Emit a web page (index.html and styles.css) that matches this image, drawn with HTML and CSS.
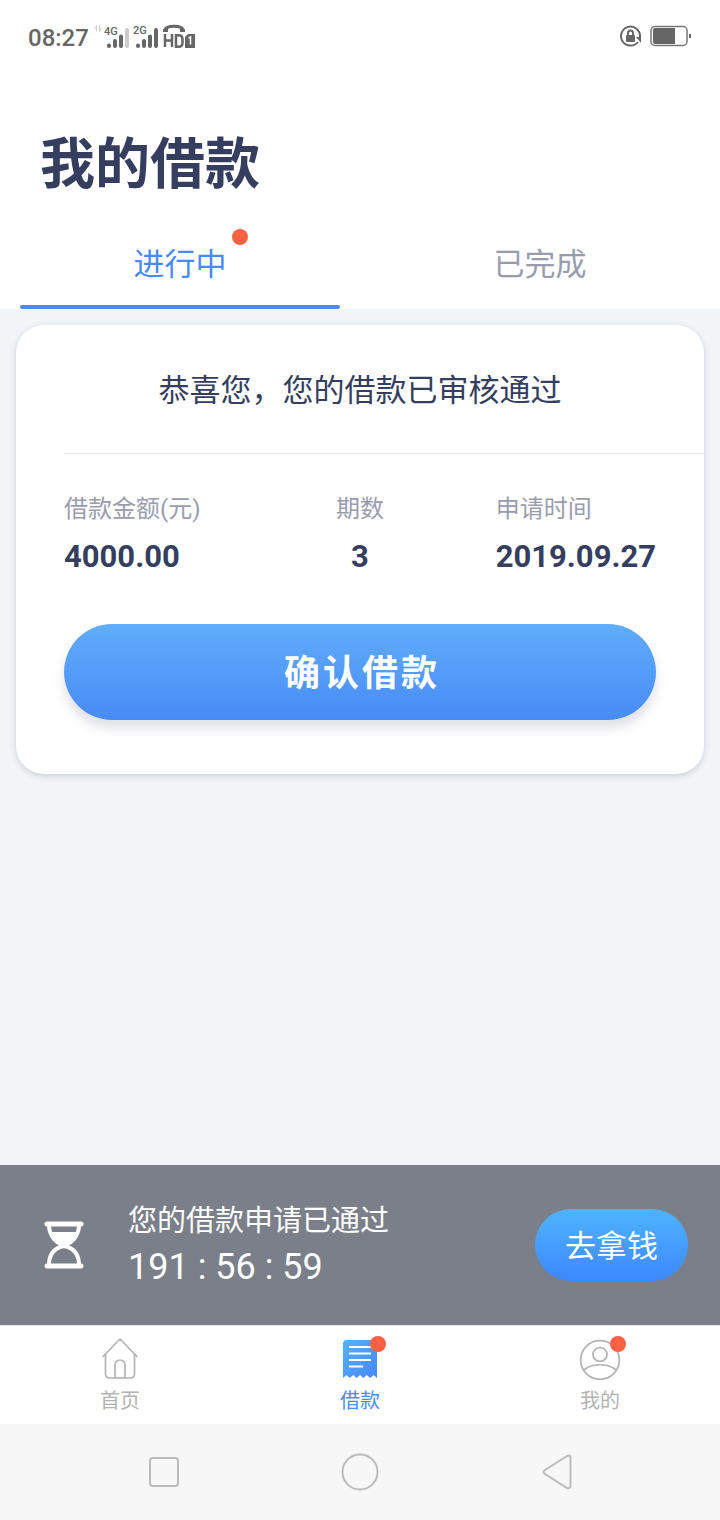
FILE: index.html
```html
<!DOCTYPE html>
<html lang="zh-CN">
<head>
<meta charset="utf-8">
<meta name="viewport" content="width=device-width, initial-scale=1">
<title>我的借款</title>
<link rel="stylesheet" href="styles.css">
</head>
<body>
<div class="app">
  <div class="status">
    <div class="status-left">
      <span class="clock">08:27</span>
      <svg class="signals" width="104" height="28" viewBox="0 0 104 28" aria-hidden="true">
        <path d="M4 3L1 6.500h3zM6 10l3-3.500H6z" fill="#ccc"/>
        <path d="M3.500 4v5.500M6.500 3.500v6" stroke="#ccc" stroke-width="1"/>
        <text x="11" y="13" class="signal-label">4G</text>
        <g stroke="#666" stroke-width="4" stroke-linecap="round">
          <path d="M16 23.500v.5M22 19v5M28 14.500v9.500M45 23.500v.5M51 19v5M57 14.500v9.500M63 8v16"/>
          <path d="M34 8v16" stroke="#ccc"/>
        </g>
        <text x="40" y="12" class="signal-label">2G</text>
        <path d="M72 8c1-5 17-5 18 0" fill="none" stroke="#666" stroke-width="3"/>
        <path d="M70 7h5v3h-5zM87 7h5v3h-5z" fill="#666"/>
        <path d="M72 12v13M79 12v13M72 18.500h7M83 13.250h2.500q4 0 4 4v3.500q0 4-4 4H83z" fill="none" stroke="#666" stroke-width="2.500"/>
        <path d="M95 12h7v14H92V15z" fill="#666"/>
        <path d="M95.500 16l2-1v7.500" fill="none" stroke="#fff" stroke-width="1.500"/>
      </svg>
    </div>
    <svg width="72" height="26" viewBox="0 0 72 26" aria-hidden="true">
      <path d="M19 19a9.500 9.500 0 1 1 2-5" fill="none" stroke="#666" stroke-width="2"/>
      <path d="M17 14h5v6z" fill="#666"/>
      <rect x="7" y="12" width="9" height="7" rx="1" fill="#666"/>
      <path d="M9 12v-2a2.500 2.500 0 0 1 5 0v2" fill="none" stroke="#666" stroke-width="2"/>
      <rect x="32" y="3.500" width="36" height="19" rx="4" fill="#fff" stroke="#777" stroke-width="1.500"/>
      <path d="M36 5h20v16H36a2 2 0 0 1-2-2V7a2 2 0 0 1 2-2z" fill="#666"/>
      <path d="M70 11h2v4h-2z" fill="#666"/>
    </svg>
  </div>

  <header class="header">
    <h1 class="title">我的借款</h1>
    <div class="tabs" role="tablist">
      <button class="tab tab-active" role="tab" aria-selected="true"><span class="tab-text">进行中</span><span class="dot tab-dot"></span></button>
      <button class="tab" role="tab" aria-selected="false"><span class="tab-text">已完成</span></button>
    </div>
  </header>

  <main class="content">
    <section class="card">
      <h2 class="card-title">恭喜您，您的借款已审核通过</h2>
      <dl class="facts">
        <div class="fact"><dt>借款金额(元)</dt><dd>4000.00</dd></div>
        <div class="fact fact-center"><dt>期数</dt><dd>3</dd></div>
        <div class="fact fact-end"><dt>申请时间</dt><dd>2019.09.27</dd></div>
      </dl>
      <button class="confirm">确认借款</button>
    </section>
  </main>

  <aside class="banner">
    <svg class="hourglass" width="40" height="50" viewBox="0 0 40 50" fill="none" stroke="#fff" aria-hidden="true">
      <path d="M3 4h34M3 46h34" stroke-width="5" stroke-linecap="round"/>
      <path d="M5 5c0 9 5 17 15 20C30 22 35 14 35 5M5 45c0-10 5-17 15-19 10 2 15 9 15 19" stroke-width="4"/>
      <path d="M5 12h30c-2 8-6 12-12 14h-6C11 24 7 20 5 12z" fill="#fff" stroke="none"/>
      <path d="M20 22v6" stroke-width="5"/>
    </svg>
    <div class="banner-text">
      <p class="banner-title">您的借款申请已通过</p>
      <p class="countdown">191 : 56 : 59</p>
    </div>
    <button class="claim">去拿钱</button>
  </aside>

  <nav class="tabbar">
    <a class="item" href="#home">
      <svg class="item-icon" width="44" height="44" viewBox="0 0 44 44" fill="none" stroke="#b3b3b3" stroke-width="1.700" stroke-linecap="round" stroke-linejoin="round" aria-hidden="true">
        <path d="M5 18.500L20.500 2.500q1.500-1.500 3 0L39 18.500M7.500 16v20a4 4 0 0 0 4 4h21a4 4 0 0 0 4-4V16M17 40V27a5 5 0 0 1 10 0v13"/>
      </svg>
      <span>首页</span>
    </a>
    <a class="item item-active" href="#loans">
      <svg class="item-icon" width="44" height="44" viewBox="0 0 44 44" aria-hidden="true">
        <defs><linearGradient id="bill" x1="0" y1="0" x2="1" y2="1"><stop offset="0" stop-color="#55b2fb"/><stop offset="1" stop-color="#4787f5"/></linearGradient></defs>
        <path d="M5 6a4 4 0 0 1 4-4h30v38l-3.400-3-3.400 3-3.400-3-3.400 3-3.400-3-3.400 3-3.400-3-3.400 3-3.400-3L5 40z" fill="url(#bill)"/>
        <path d="M11 9h22M11 15.500h22M11 22h22M11 28.500h14" stroke="#fff" stroke-width="2"/>
      </svg>
      <span class="dot item-dot"></span>
      <span>借款</span>
    </a>
    <a class="item" href="#me">
      <svg class="item-icon" width="44" height="44" viewBox="0 0 44 44" fill="none" stroke="#b3b3b3" stroke-width="1.700" aria-hidden="true">
        <circle cx="22" cy="22" r="19.300"/><circle cx="22" cy="16.500" r="7"/><path d="M6 32c8-7 24-7 32 0"/>
      </svg>
      <span class="dot item-dot"></span>
      <span>我的</span>
    </a>
  </nav>

  <div class="system">
    <button class="key" aria-label="Recent"><svg width="40" height="40" viewBox="0 0 40 40"><rect x="6" y="6" width="28" height="28" rx="3"/></svg></button>
    <button class="key" aria-label="Home"><svg width="40" height="40" viewBox="0 0 40 40"><circle cx="20" cy="20" r="17.500"/></svg></button>
    <button class="key" aria-label="Back"><svg width="40" height="40" viewBox="0 0 40 40"><path d="M9 18L31 4q3-1.500 3.500 1v29q-.5 3-3.500 2L9 22q-3-2 0-4z"/></svg></button>
  </div>
</div>
</body>
</html>
```
FILE: styles.css
```css
* {
  box-sizing: border-box;
}

body,
h1,
h2,
p,
dl,
dd {
  margin: 0;
}

body {
  font-family: Roboto, "Noto Sans CJK SC", sans-serif;
  color: #353e5e;
  background: #f1f5f8;
}

button {
  padding: 0;
  border: 0;
  background: none;
  font-family: inherit;
  cursor: pointer;
}

.app {
  display: flex;
  flex-direction: column;
  min-height: 100vh;
}

.status {
  display: flex;
  align-items: center;
  justify-content: space-between;
  height: 72px;
  padding: 0 29px 0 28px;
  background: #fff;
}

.status-left {
  display: flex;
  align-items: center;
  gap: 4px;
}

.clock {
  font-size: 24px;
  line-height: 32px;
  padding-top: 4px;
  color: #666;
  font-weight: 500;
}

.signal-label {
  font-size: 11px;
  font-weight: 500;
  fill: #666;
}

.header {
  padding: 0 20px;
  background: #fff;
}

.title {
  padding: 52px 20px 16px;
  font-size: 55px;
  line-height: 80px;
  font-weight: 700;
}

.tabs {
  display: flex;
  gap: 40px;
}

.tab {
  position: relative;
  flex: 1;
  height: 89px;
  padding-top: 4px;
  border-bottom: 4px solid transparent;
  color: #9a9cae;
  font-size: 31px;
  line-height: 44px;
}

.tab-active {
  color: #488bf5;
}

.tab-active::after {
  content: "";
  position: absolute;
  left: 0;
  right: 0;
  bottom: -4px;
  height: 4px;
  border-radius: 2px;
  background: #488bf5;
}

.dot {
  position: absolute;
  width: 16px;
  height: 16px;
  border-radius: 50%;
  background: #fc6042;
}

.tab-dot {
  top: 9px;
  left: calc(50% + 52px);
}

.content {
  flex: 1;
  padding: 16px;
}

.card {
  padding: 0 0 54px 48px;
  border-radius: 28px;
  background: #fff;
  box-shadow: 0 2px 6px rgba(53, 62, 94, 0.2);
}

.card-title {
  padding: 42px 48px 38px 0;
  border-bottom: 1px solid #e4e5ea;
  font-size: 31px;
  line-height: 48px;
  font-weight: 400;
  text-align: center;
}

.facts {
  display: grid;
  grid-template-columns: 1fr auto 1fr;
  padding: 37px 48px 47px 0;
}

.fact dt {
  font-size: 24px;
  line-height: 36px;
  color: #9a9cae;
}

.fact dd {
  padding-top: 10px;
  font-size: 31px;
  line-height: 40px;
  font-weight: 700;
}

.fact-center {
  text-align: center;
}

.fact-end {
  justify-self: end;
}

.confirm {
  display: block;
  width: calc(100% - 48px);
  height: 96px;
  padding-bottom: 4px;
  border-radius: 48px;
  background: linear-gradient(#60adfb, #488bf5);
  box-shadow: 0 8px 12px rgba(53, 62, 94, 0.16);
  color: #fff;
  font-size: 36px;
  font-weight: 700;
  letter-spacing: 3px;
  text-indent: 4px;
}

.banner {
  display: flex;
  align-items: center;
  height: 160px;
  padding: 0 32px 0 44px;
  background: #7b7f89;
  color: #fff;
}

.banner-text {
  flex: 1;
  padding-left: 44px;
}

.banner-title {
  font-size: 29px;
  line-height: 44px;
}

.countdown {
  font-size: 36px;
  line-height: 48px;
}

.claim {
  width: 153px;
  height: 72px;
  padding-bottom: 4px;
  border-radius: 36px;
  background: linear-gradient(#4fb4ff, #3c88ff);
  color: #fff;
  font-size: 31px;
}

.tabbar {
  display: flex;
  height: 99px;
  border-top: 1px solid #e4e5ea;
  background: #fff;
}

.item {
  position: relative;
  flex: 1;
  display: flex;
  flex-direction: column;
  align-items: center;
  padding-top: 12px;
  font-size: 20px;
  line-height: 38px;
  color: #b3b3b3;
  text-decoration: none;
}

.item-active {
  color: #488bf5;
}

.item-dot {
  top: 10px;
  left: calc(50% + 10px);
}

.system {
  display: flex;
  justify-content: space-between;
  align-items: center;
  height: 96px;
  padding: 0 20%;
  background: #f7f7f7;
}

.key {
  width: 40px;
  height: 40px;
}

.key svg {
  display: block;
  fill: none;
  stroke: #bbb;
  stroke-width: 2;
}
```
